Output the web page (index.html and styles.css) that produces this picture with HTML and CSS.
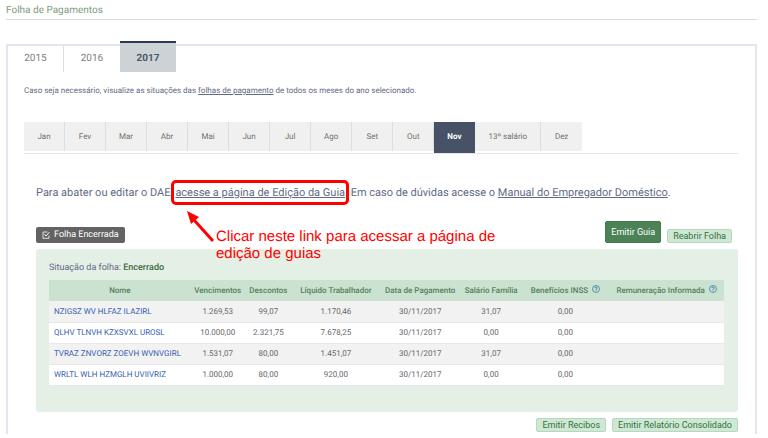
FILE: index.html
```html
<!DOCTYPE html>
<html lang="pt-BR">
<head>
    <meta charset="UTF-8">
    <meta name="viewport" content="width=device-width, initial-scale=1.0">
    <title>Folha de Pagamentos</title>
    <link rel="stylesheet" href="styles.css">
</head>
<body>
    <h1>Folha de Pagamentos</h1>
    <main class="painel">
        <nav class="anos">
            <a href="#">2015</a>
            <a href="#">2016</a>
            <a href="#" class="ativo">2017</a>
        </nav>
        <p class="aviso">Caso seja necessário, visualize as situações das <a href="#">folhas de pagamento</a> de todos os meses do ano selecionado.</p>
        <nav class="meses">
            <a href="#">Jan</a>
            <a href="#">Fev</a>
            <a href="#">Mar</a>
            <a href="#">Abr</a>
            <a href="#">Mai</a>
            <a href="#">Jun</a>
            <a href="#">Jul</a>
            <a href="#">Ago</a>
            <a href="#">Set</a>
            <a href="#">Out</a>
            <a href="#" class="ativo">Nov</a>
            <a href="#">13º salário</a>
            <a href="#">Dez</a>
        </nav>
        <section class="conteudo">
            <p class="mensagem">Para abater ou editar o DAE, <span class="destaque"><a href="#">acesse a página de Edição da Guia</a></span>. Em caso de dúvidas acesse o <a href="#">Manual do Empregador Doméstico</a>.</p>
            <div class="nota">
                <svg class="seta" width="30" height="34" viewBox="0 0 30 34">
                    <path d="M27 30 L8 9" stroke="#f00" stroke-width="3" fill="none"/>
                    <path d="M1 0 L13 6 L5 13 Z" fill="#f00"/>
                </svg>
                <p>Clicar neste link para acessar a página de<br>edição de guias</p>
            </div>
            <div class="barra">
                <span class="status">
                    <svg width="8" height="8" viewBox="0 0 8 8" fill="none" stroke="#fff">
                        <path d="M5.5 1 H1 V7.3 H7 V4.5" stroke-width="0.8"/>
                        <path d="M2.5 3.2 L4 5 L7.4 1.2" stroke-width="1"/>
                    </svg>
                    Folha Encerrada
                </span>
                <div class="botoes">
                    <button class="principal">Emitir Guia</button>
                    <button>Reabrir Folha</button>
                </div>
            </div>
            <div class="folha">
                <p class="situacao">Situação da folha: <strong>Encerrado</strong></p>
                <table>
                    <colgroup>
                        <col class="c-nome"><col class="c-venc"><col class="c-desc"><col class="c-liq">
                        <col class="c-data"><col class="c-sal"><col class="c-inss"><col class="c-rem">
                    </colgroup>
                    <thead>
                        <tr>
                            <th>Nome</th>
                            <th>Vencimentos</th>
                            <th>Descontos</th>
                            <th>Líquido Trabalhador</th>
                            <th>Data de Pagamento</th>
                            <th>Salário Família</th>
                            <th>Benefícios INSS
                                <svg class="ajuda" width="8" height="8" viewBox="0 0 8 8" fill="none" stroke="#3a80b0">
                                    <circle cx="4" cy="4" r="3.5" stroke-width="0.8"/>
                                    <path d="M2.7 3 Q2.9 2 4 2 Q5.3 2.1 5.2 3.1 Q5 3.8 4 4.1 V4.8 M4 5.4 V6.2" stroke-width="0.9"/>
                                </svg>
                            </th>
                            <th>Remuneração Informada
                                <svg class="ajuda" width="8" height="8" viewBox="0 0 8 8" fill="none" stroke="#3a80b0">
                                    <circle cx="4" cy="4" r="3.5" stroke-width="0.8"/>
                                    <path d="M2.7 3 Q2.9 2 4 2 Q5.3 2.1 5.2 3.1 Q5 3.8 4 4.1 V4.8 M4 5.4 V6.2" stroke-width="0.9"/>
                                </svg>
                            </th>
                        </tr>
                    </thead>
                    <tbody>
                        <tr><td><a href="#">NZIGSZ WV HLFAZ ILAZIRL</a></td><td>1.269,53</td><td>99,07</td><td>1.170,46</td><td>30/11/2017</td><td>31,07</td><td>0,00</td><td></td></tr>
                        <tr><td><a href="#">QLHV TLNVH KZXSVXL UROSL</a></td><td>10.000,00</td><td>2.321,75</td><td>7.678,25</td><td>30/11/2017</td><td>0,00</td><td>0,00</td><td></td></tr>
                        <tr><td><a href="#">TVRAZ ZNVORZ ZOEVH WVNVGIRL</a></td><td>1.531,07</td><td>80,00</td><td>1.451,07</td><td>30/11/2017</td><td>31,07</td><td>0,00</td><td></td></tr>
                        <tr><td><a href="#">WRLTL WLH HZMGLH UVIIVRIZ</a></td><td>1.000,00</td><td>80,00</td><td>920,00</td><td>30/11/2017</td><td>0,00</td><td>0,00</td><td></td></tr>
                    </tbody>
                </table>
            </div>
            <div class="botoes rodape">
                <button>Emitir Recibos</button>
                <button>Emitir Relatório Consolidado</button>
            </div>
        </section>
    </main>
</body>
</html>
```
FILE: styles.css
```css
* {
    box-sizing: border-box;
}
body {
    margin: 0;
    padding: 4px 11px 4px 6px;
    background-color: #fff;
    color: #5f6b85;
    font-family: Roboto, Arial, sans-serif;
    font-size: 8px;
    text-rendering: geometricPrecision;
}
h1 {
    margin: 0 0 24px;
    padding-bottom: 2px;
    border-bottom: 1px solid #d3dbe7;
    color: #7d9c80;
    font-size: 10px;
    line-height: 13px;
    font-weight: normal;
}
p {
    margin: 0;
}
a {
    color: inherit;
}
.painel {
    border: 2px solid #e1e6f1;
    border-bottom: none;
    padding: 0 17px 2px 16px;
}

/* abas dos anos */
.anos {
    display: flex;
    margin-left: -16px;
}
.anos a {
    width: 56px;
    height: 26px;
    line-height: 25px;
    border-right: 1px solid #dcdcdc;
    color: #808080;
    font-size: 10px;
    text-align: center;
    text-decoration: none;
}
.anos a:nth-child(2) {
    border-right: none;
}
.anos .ativo {
    margin-top: -5px;
    height: 31px;
    border-top: 2px solid #2f3850;
    border-right: none;
    padding-top: 3px;
    background-color: #ccd2d5;
    color: #4c576b;
    font-weight: bold;
}
.aviso {
    margin: 13px 0 26px;
    line-height: 11px;
}

/* meses */
.meses {
    display: flex;
    border-bottom: 1px solid #e4e6e6;
}
.meses a {
    min-width: 41px;
    height: 29px;
    margin-bottom: 2px;
    padding: 0 13px;
    border-right: 1px solid #dedede;
    background-color: #f0f0f0;
    color: #70706a;
    line-height: 29px;
    text-align: center;
    text-decoration: none;
}
.meses a:last-child {
    border-right: none;
}
.meses .ativo {
    height: 31px;
    margin-bottom: 0;
    background-color: #485266;
    border-color: #485266;
    color: #fff;
    font-weight: bold;
}

.conteudo {
    position: relative;
    padding: 31px 0 0 12px;
}
.mensagem {
    font-size: 11px;
    line-height: 16px;
}
.destaque {
    position: relative;
}
.destaque::after {
    content: "";
    position: absolute;
    inset: -6px -4px;
    border: 3px solid #f00;
    border-radius: 5px;
}
.nota {
    position: absolute;
    top: 57px;
    left: 162px;
    display: flex;
    color: #f00;
    font-family: "Liberation Sans", Arial, sans-serif;
    font-size: 15px;
    line-height: 17px;
}
.nota p {
    margin-top: 17px;
}

.barra {
    display: flex;
    justify-content: space-between;
    align-items: flex-end;
    margin: 20px 6px 6px 0;
}
.status {
    display: flex;
    align-items: center;
    gap: 4px;
    height: 16px;
    padding: 0 6px;
    border-radius: 2px;
    background-color: #636363;
    color: #fff;
    font-size: 9px;
}
.botoes {
    display: flex;
    justify-content: flex-end;
    align-items: flex-end;
    gap: 6px;
}
button {
    height: 14px;
    padding: 0 5px;
    border: 1px solid #b5d9bd;
    border-radius: 2px;
    background-color: #cfe8d4;
    color: #34703f;
    font-family: inherit;
    font-size: 9px;
    line-height: 12px;
    cursor: pointer;
}
.principal {
    height: 22px;
    border-color: #47794f;
    background-color: #4b8256;
    color: #fff;
}

/* folha */
.folha {
    padding: 13px 14px 26px 13px;
    border-radius: 3px;
    background-color: #e4efe5;
}
.situacao {
    margin-bottom: 6px;
    font-size: 9px;
    line-height: 12px;
}
.situacao strong {
    color: #3e6b43;
    font-weight: 500;
}
table {
    width: 100%;
    table-layout: fixed;
    border-collapse: collapse;
    background-color: #fff;
}
.c-nome { width: 21%; }
.c-venc { width: 8%; }
.c-desc { width: 7%; }
.c-liq { width: 13%; }
.c-data { width: 12%; }
.c-sal { width: 9%; }
.c-inss { width: 13%; }
.c-rem { width: 17%; }
th, td {
    height: 21px;
    padding: 0;
    text-align: center;
    white-space: nowrap;
}
th {
    background-color: #cbe2d0;
    color: #55805d;
    font-weight: 500;
    line-height: 16px;
}
td {
    border-bottom: 1px solid #e6e8ea;
    color: #66666a;
}
td:first-child {
    padding-left: 5px;
    text-align: left;
}
td a {
    color: #3560b0;
    text-decoration: none;
}
tbody tr:nth-child(odd) {
    background-color: #f2f2f2;
}
.ajuda {
    margin-left: 2px;
    vertical-align: 0;
}
.rodape {
    margin-top: 6px;
}
```
